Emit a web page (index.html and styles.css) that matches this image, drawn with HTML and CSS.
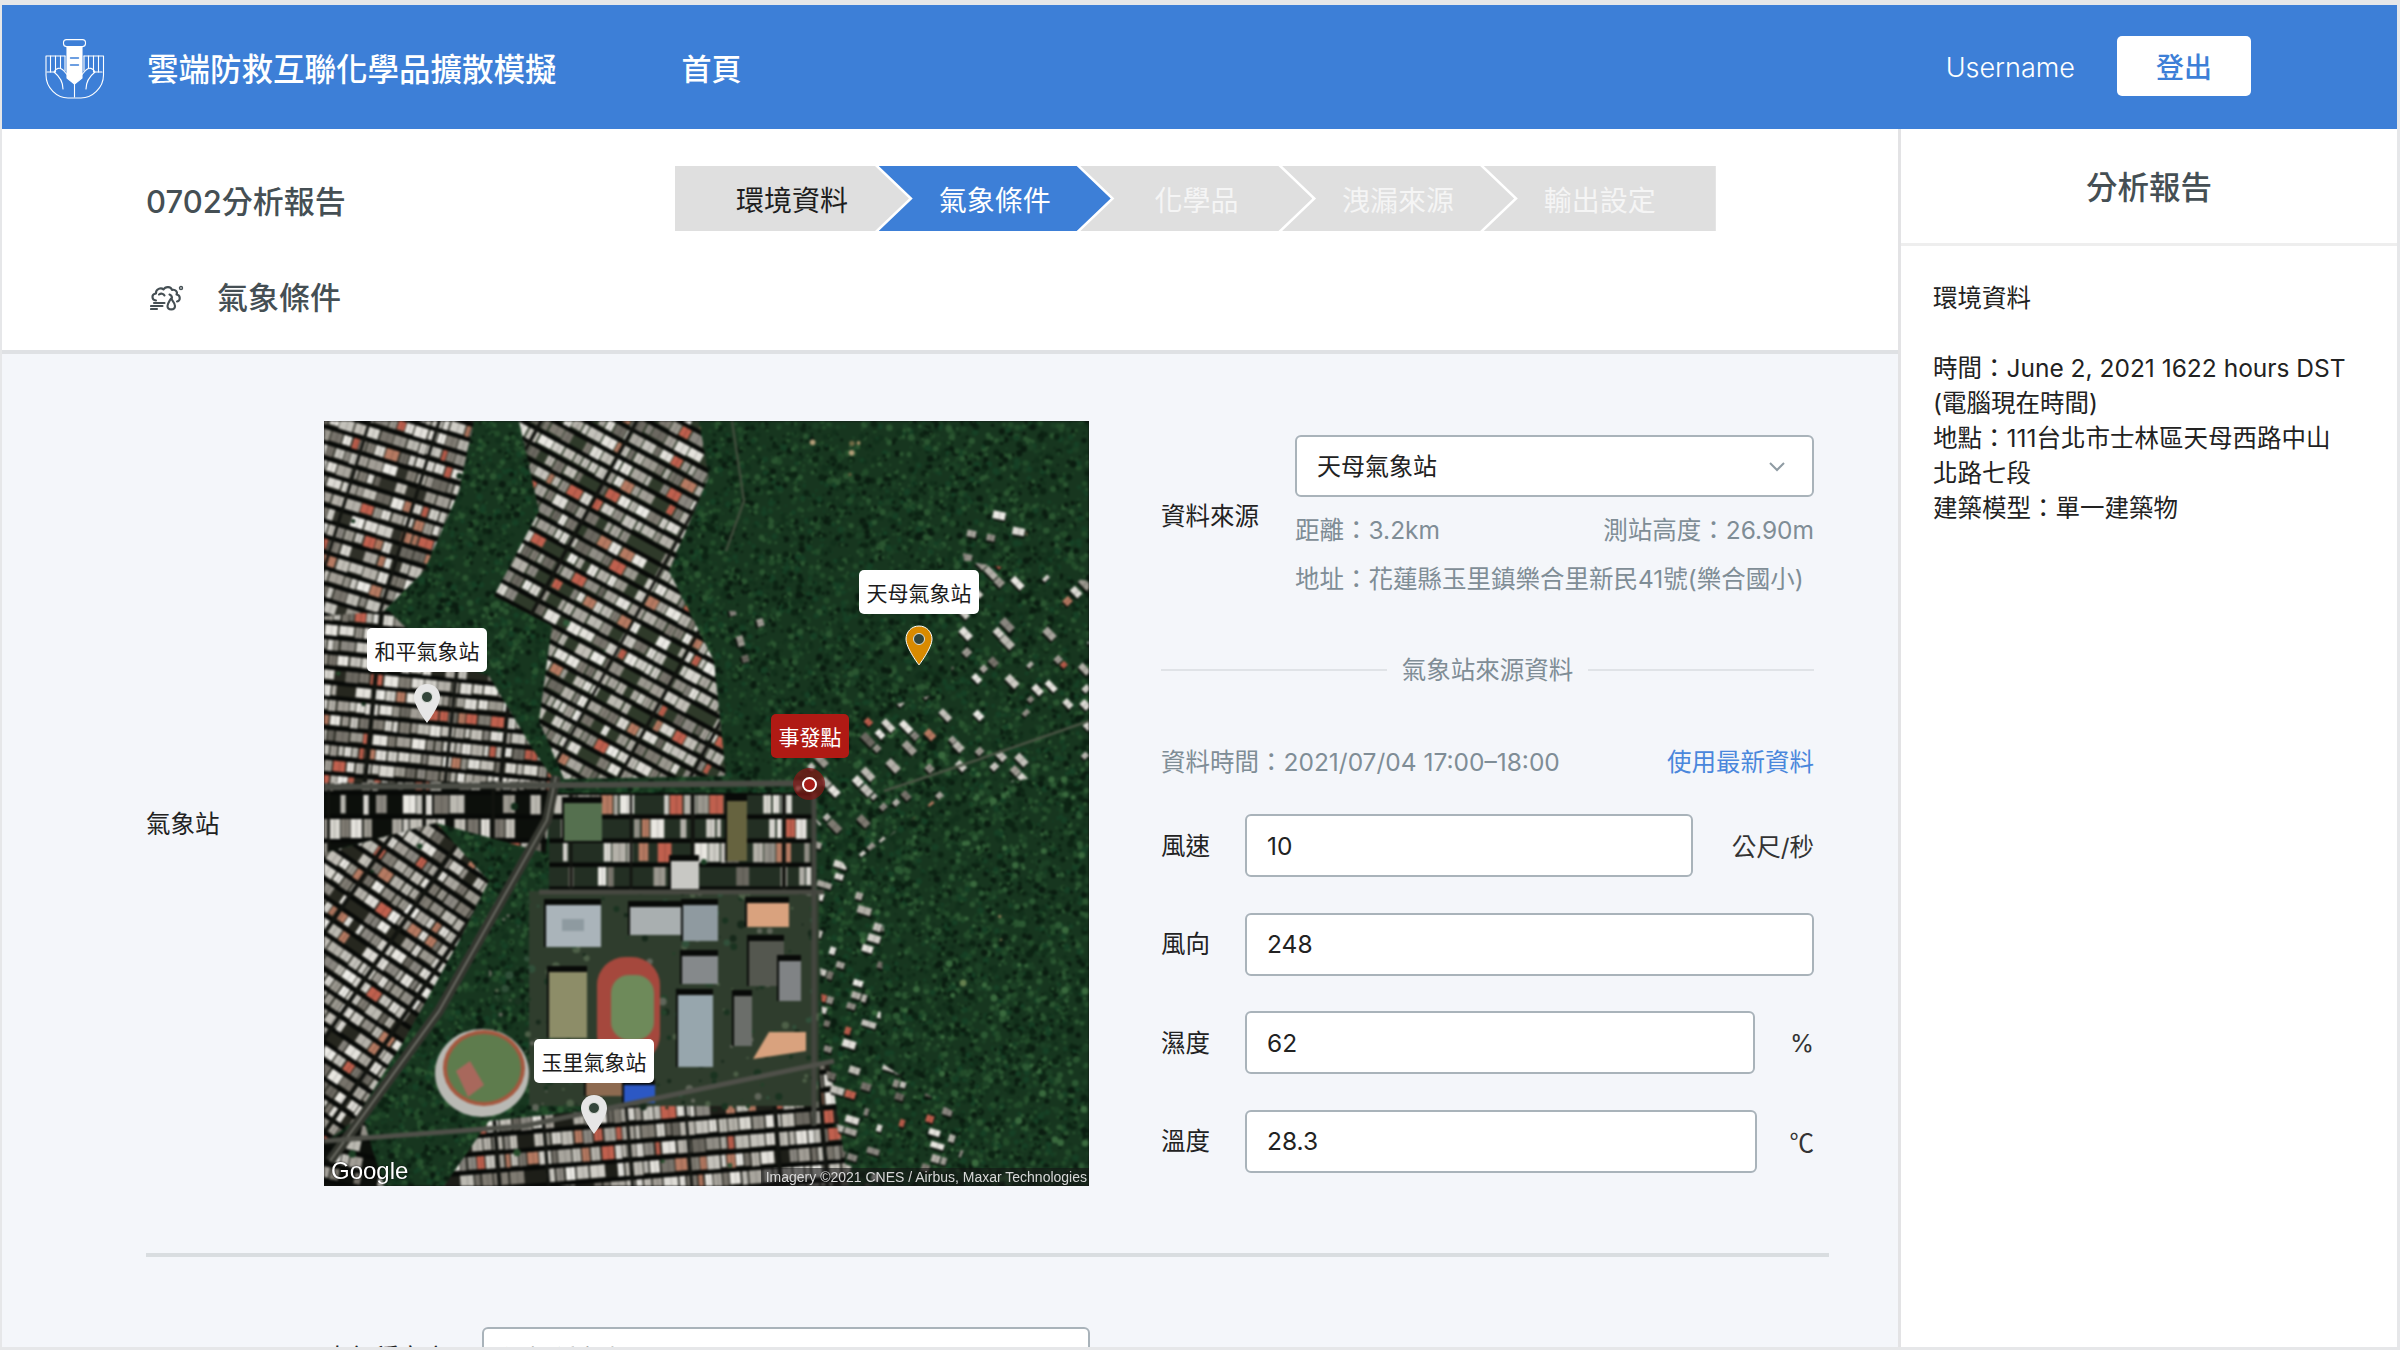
FILE: index.html
```html
<!DOCTYPE html>
<html lang="zh-Hant">
<head>
  <meta charset="UTF-8">
  <meta name="viewport" content="width=device-width, initial-scale=1.0">
  <title>雲端防救互聯化學品擴散模擬</title>
  <link rel="stylesheet" href="styles.css">
</head>
<body>
<div class="frame">

  <!-- Top bar -->
  <header class="topbar">
    <svg class="logo" viewBox="0 0 60 60" fill="none" stroke="#fff" stroke-width="1.1" stroke-linecap="round" stroke-linejoin="round">
      <rect x="18.5" y="0.6" width="22" height="7" rx="3"/>
      <path d="M22 8 H37 V39 L29.5 45 L22 39 Z" fill="#fff"/>
      <path d="M25.5 19 H33.5 M25.5 26 H33.5" stroke="#3d7fd7" stroke-width="1.4"/>
      <path d="M1 17 H20 M1 17 V36 C1 49 12 59 23 59 H36 C47 59 58.500 49 58.500 36 V17 H39"/>
      <path d="M5.500 17 V33 M10.500 17 V33 M15.500 17 V29 M20 17 V32"/>
      <path d="M39 32 V17 M43.500 29 V17 M48.500 33 V17 M53.500 33 V17"/>
      <path d="M2 33 H9 C11 29 15 28 18 31 L29.500 44 L41 31 C44 28 48 29 50 33 H57"/>
      <path d="M9 33 C14 37 18 42 18 50 M50 33 C45 37 41 42 41 50 M29.500 44 V58"/>
    </svg>
    <div class="brand">雲端防救互聯化學品擴散模擬</div>
    <a class="nav-link">首頁</a>
    <div class="user-area">
      <span class="username">Username</span>
      <button class="logout">登出</button>
    </div>
  </header>

  <div class="workspace">
    <main class="main">

      <!-- Title, stepper and section name -->
      <section class="page-head">
        <div class="head-row">
          <h1 class="report-title">0702分析報告</h1>
          <ol class="stepper">
            <li class="step step-first step-done">環境資料</li>
            <li class="step step-active">氣象條件</li>
            <li class="step">化學品</li>
            <li class="step">洩漏來源</li>
            <li class="step step-last">輸出設定</li>
          </ol>
        </div>
        <h2 class="section-title">
          <svg class="section-icon" viewBox="0 0 34 26" fill="none" stroke="#454f54" stroke-width="2.1" stroke-linecap="round" stroke-linejoin="round">
            <path d="M6 15.500 C1.500 15 1 9 6 8.500 C5.500 4 11 2 13.500 4.500 C15.500 1 21 1.500 22 5 C25.500 4 28 7 26.500 9.500 C30.500 10 31 15.500 27 16.500"/>
            <path d="M9 9.500 C11 8 13.500 8.500 14.500 10.500 M22 13 C22 11.500 21 10 19.500 9.500"/>
            <path d="M21 13.500 C19 17 17.500 18.500 17.500 21 C17.500 25.500 25 25.500 25 21 C25 18.500 23 16.500 21 13.500 Z"/>
            <circle cx="31" cy="3" r="1.500" stroke-width="1.400"/>
            <path d="M4 18 H14.500 M1 21 H12.500 M1 24 H7"/>
          </svg>
          氣象條件
        </h2>
      </section>

      <section class="content">
        <div class="station-row">
          <div class="row-label station-label">氣象站</div>

          <!-- Satellite map with station pins -->
          <div class="map">
            <canvas id="map-canvas" class="map-canvas" width="765" height="765"></canvas>

            <div class="map-tag tag-tianmu">天母氣象站</div>
            <svg class="pin pin-tianmu" viewBox="0 0 28 41"><path class="pin-orange" d="M14 1 C6.500 1 1 7 1 14 C1 23 14 40 14 40 C14 40 27 23 27 14 C27 7 21.500 1 14 1 Z"/><circle cx="14" cy="14" r="5.500" class="pin-hole"/></svg>

            <div class="map-tag tag-heping">和平氣象站</div>
            <svg class="pin pin-heping" viewBox="0 0 28 41"><path class="pin-grey" d="M14 1 C6.500 1 1 7 1 14 C1 23 14 40 14 40 C14 40 27 23 27 14 C27 7 21.500 1 14 1 Z"/><circle cx="14" cy="14" r="5.500" class="pin-hole"/></svg>

            <div class="map-tag tag-yuli">玉里氣象站</div>
            <svg class="pin pin-yuli" viewBox="0 0 28 41"><path class="pin-grey" d="M14 1 C6.500 1 1 7 1 14 C1 23 14 40 14 40 C14 40 27 23 27 14 C27 7 21.500 1 14 1 Z"/><circle cx="14" cy="14" r="5.500" class="pin-hole"/></svg>

            <div class="map-tag tag-incident">事發點</div>
            <div class="incident-dot"><span></span></div>

            <div class="map-google">Google</div>
            <div class="map-credit">Imagery ©2021 CNES / Airbus, Maxar Technologies</div>
          </div>

          <!-- Weather form -->
          <div class="weather-form">
            <div class="source-row">
              <div class="row-label source-label">資料來源</div>
              <div class="source-body">
                <div class="select">
                  <span>天母氣象站</span>
                  <svg class="chevron" viewBox="0 0 18 11" fill="none" stroke="#8f9ba3" stroke-width="2"><path d="M2 2 L9 9 L16 2"/></svg>
                </div>
                <div class="meta meta-split"><span>距離：3.2km</span><span>測站高度：26.90m</span></div>
                <div class="meta">地址：花蓮縣玉里鎮樂合里新民41號(樂合國小)</div>
              </div>
            </div>

            <div class="split-line"><span>氣象站來源資料</span></div>

            <div class="data-time">
              <span>資料時間：2021/07/04 17:00–18:00</span>
              <a class="link">使用最新資料</a>
            </div>

            <div class="fields">
              <div class="field">
                <label class="row-label">風速</label>
                <input class="text-input" type="text" value="10">
                <span class="unit unit-wide">公尺/秒</span>
              </div>
              <div class="field">
                <label class="row-label">風向</label>
                <input class="text-input" type="text" value="248">
              </div>
              <div class="field">
                <label class="row-label">濕度</label>
                <input class="text-input" type="text" value="62">
                <span class="unit">%</span>
              </div>
              <div class="field">
                <label class="row-label">溫度</label>
                <input class="text-input" type="text" value="28.3">
                <span class="unit unit-narrow">℃</span>
              </div>
            </div>
          </div>
        </div>

        <hr class="rule">

        <div class="next-row">
          <div class="row-label next-label">大氣穩定度</div>
          <div class="select next-select"><span>選擇穩定度</span></div>
        </div>
      </section>
    </main>

    <!-- Report panel -->
    <aside class="report">
      <div class="report-head">分析報告</div>
      <div class="report-body">
        <p class="report-sub">環境資料</p>
        <p>時間：June 2, 2021 1622 hours DST<br>(電腦現在時間)<br>地點：111台北市士林區天母西路中山<br>北路七段<br>建築模型：單一建築物</p>
      </div>
    </aside>
  </div>
</div>
<script src="map.js"></script>
</body>
</html>
```

FILE: styles.css
```css
:root {
  --blue: #3d7fd7;
  --page-bg: #f4f6fa;
  --text: #222;
  --title: #454f54;
  --muted: #7f8d96;
  --line: #a9b3ba;
}

html, body {
  height: 100%;
  margin: 0;
  overflow: hidden;
  font-family: "Inter", "Noto Sans CJK TC", sans-serif;
  color: var(--text);
  background-color: #e6e7e9;
}

.frame {
  height: 1350px;
  box-sizing: border-box;
  padding: 5px 3px 3px 2px;
  display: flex;
  flex-direction: column;
}

/* Top bar */
.topbar {
  height: 124px;
  flex: none;
  display: flex;
  align-items: center;
  background-color: var(--blue);
  color: #fff;
}

.logo {
  width: 60px;
  height: 60px;
  margin-left: 43px;
  margin-top: 3px;
}

.brand {
  margin-left: 42px;
  font-size: 31.5px;
  font-weight: 500;
}

.nav-link {
  margin-left: 125px;
  font-size: 30px;
  font-weight: 500;
}

.user-area {
  margin-left: auto;
  margin-right: 146px;
  display: flex;
  align-items: center;
  gap: 42px;
}

.username {
  font-size: 27px;
  font-weight: 300;
}

.logout {
  width: 134px;
  height: 60px;
  margin-top: -2px;
  border: none;
  border-radius: 5px;
  background-color: #fff;
  color: var(--blue);
  font-family: inherit;
  font-size: 28px;
  font-weight: 500;
}

/* Body */
.workspace {
  flex: 1;
  min-height: 0;
  display: flex;
}

.main {
  flex: 1;
  min-width: 0;
  overflow: hidden;
  background-color: var(--page-bg);
}

.page-head {
  height: 221px;
  box-sizing: content-box;
  background-color: #fff;
  border-bottom: 4px solid #dfe1e4;
  padding-left: 144px;
}

.head-row {
  display: flex;
  padding-top: 37px;
}

.report-title {
  width: 529px;
  margin: 0;
  padding-top: 6px;
  font-size: 31px;
  line-height: 60px;
  font-weight: 500;
  color: var(--title);
}

.stepper {
  display: flex;
  margin: 0;
  padding: 0;
  list-style: none;
}

.step {
  width: 232px;
  height: 65px;
  margin-left: -30.300px;
  display: flex;
  align-items: center;
  justify-content: center;
  font-size: 28px;
  color: #f5f5f5;
  background-color: #dfdfdf;
  clip-path: polygon(0 0, calc(100% - 34px) 0, 100% 50%, calc(100% - 34px) 100%, 0 100%, 34px 50%);
}

.step-first {
  width: 234px;
  margin-left: 0;
  clip-path: polygon(0 0, calc(100% - 34px) 0, 100% 50%, calc(100% - 34px) 100%, 0 100%);
}

.step-last {
  clip-path: polygon(0 0, 100% 0, 100% 100%, 0 100%, 34px 50%);
}

.step-done {
  color: #1d1d1d;
}

.step-active {
  background-color: var(--blue);
  color: #fff;
}

.section-title {
  margin: 43px 0 0 0;
  display: flex;
  align-items: center;
  font-size: 31px;
  line-height: 46px;
  font-weight: 500;
  color: var(--title);
}

.section-icon {
  width: 34px;
  height: 26px;
  margin: 0 33px 0 4px;
}

.content {
  padding: 67px 0 0 144px;
  width: 1683px;
}

.station-row {
  display: flex;
  align-items: flex-start;
}

.row-label {
  font-size: 24.500px;
  line-height: 34px;
  color: var(--text);
}

.station-label {
  width: 178px;
  margin-top: 386px;
}

/* Map */
.map {
  position: relative;
  width: 765px;
  height: 765px;
  flex: none;
  overflow: hidden;
  outline: 2px solid #111;
  outline-offset: -2px;
}

.map-canvas {
  display: block;
  filter: blur(0.8px);
}

.map-tag {
  position: absolute;
  width: 120px;
  height: 44px;
  display: flex;
  align-items: center;
  justify-content: center;
  border-radius: 5px;
  background-color: #fff;
  color: #1b1b1b;
  font-size: 21px;
}

.tag-tianmu { left: 535px; top: 149px; }
.tag-heping { left: 43px; top: 207px; }
.tag-yuli { left: 210px; top: 618px; }

.tag-incident {
  left: 447px;
  top: 293px;
  width: 78px;
  background-color: #b01a14;
  color: #fff;
}

.pin {
  position: absolute;
  width: 28px;
  height: 41px;
}

.pin-tianmu { left: 581px; top: 204px; }
.pin-heping { left: 89px; top: 262px; }
.pin-yuli { left: 256px; top: 673px; }

.pin-orange { fill: #d98a00; stroke: #fff; stroke-width: 1; }
.pin-grey { fill: #e6e6e6; }
.pin-hole { fill: #33453a; stroke: #dfe3dd; stroke-width: 1; }

.incident-dot {
  position: absolute;
  left: 469px;
  top: 347px;
  width: 32px;
  height: 32px;
  border-radius: 50%;
  background-color: rgba(140, 20, 20, 0.65);
  display: flex;
  align-items: center;
  justify-content: center;
}

.incident-dot span {
  width: 11px;
  height: 11px;
  border: 2px solid #fff;
  border-radius: 50%;
  background-color: #a81c18;
}

.map-google {
  position: absolute;
  left: 7px;
  bottom: 1px;
  color: #fff;
  font-family: "Liberation Sans", sans-serif;
  font-size: 24px;
  line-height: 28px;
  text-shadow: 0 0 2px #000;
}

.map-credit {
  position: absolute;
  right: 0;
  bottom: 0;
  height: 18px;
  padding: 0 2px 0 5px;
  background-color: rgba(20, 20, 20, 0.6);
  color: #d8d8d8;
  font-family: "Liberation Sans", sans-serif;
  font-size: 14px;
  line-height: 18px;
  white-space: nowrap;
}

/* Weather form */
.weather-form {
  width: 653px;
  margin-left: 72px;
  margin-top: 14px;
  flex: none;
}

.source-row {
  display: flex;
  align-items: center;
}

.source-label {
  width: 134px;
  flex: none;
}

.source-body {
  flex: 1;
}

.select {
  height: 62px;
  box-sizing: border-box;
  display: flex;
  align-items: center;
  justify-content: space-between;
  padding: 0 16px 3px 20px;
  border: 2px solid var(--line);
  border-radius: 6px;
  background-color: #fff;
  font-size: 24px;
}

.chevron {
  width: 18px;
  height: 11px;
  margin: 3px 10px 0 0;
}

.meta {
  margin-top: 15px;
  font-size: 24.500px;
  line-height: 34px;
  color: var(--muted);
}

.meta-split {
  display: flex;
  justify-content: space-between;
  margin-top: 16px;
}

.split-line {
  margin-top: 57px;
  display: flex;
  align-items: center;
  gap: 15px;
  font-size: 24.500px;
  line-height: 34px;
  color: var(--muted);
}

.split-line::before,
.split-line::after {
  content: "";
  flex: 1;
  height: 2px;
  background-color: #e0e3e7;
}

.data-time {
  margin-top: 58px;
  display: flex;
  justify-content: space-between;
  font-size: 24.500px;
  line-height: 34px;
  color: var(--muted);
}

.link {
  color: #4a87dc;
}

.fields {
  margin-top: 35px;
  display: flex;
  flex-direction: column;
  gap: 35.5px;
}

.field {
  display: flex;
  align-items: center;
  height: 63px;
}

.field .row-label {
  width: 84px;
  flex: none;
}

.text-input {
  flex: 1;
  min-width: 0;
  height: 63px;
  box-sizing: border-box;
  padding: 0 20px;
  border: 2px solid var(--line);
  border-radius: 6px;
  background-color: #fff;
  font-family: inherit;
  font-size: 24.500px;
  color: var(--text);
}

.unit {
  width: 59px;
  flex: none;
  text-align: right;
  font-size: 24.500px;
  color: #333;
}

.unit-wide { width: 121px; }

.unit-narrow {
  width: 57px;
  font-family: "Noto Sans CJK TC", sans-serif;
}

.rule {
  margin: 67px 0 0 0;
  height: 4px;
  border: none;
  background-color: #d9dde0;
}

.next-row {
  margin-top: 70px;
  display: flex;
  align-items: flex-start;
}

.next-label {
  width: 157px;
  margin-left: 179px;
  padding-top: 14px;
}

.next-select {
  width: 608px;
  color: #777;
}

/* Report panel */
.report {
  width: 499px;
  flex: none;
  box-sizing: border-box;
  border-left: 3px solid #e3e3e5;
  background-color: #fff;
}

.report-head {
  height: 112px;
  padding-bottom: 2px;
  border-bottom: 3px solid #eeeeee;
  display: flex;
  align-items: center;
  justify-content: center;
  font-size: 31.5px;
  font-weight: 500;
  color: var(--title);
}

.report-body {
  padding: 35px 15px 0 32px;
  font-size: 24.500px;
  line-height: 35px;
  color: var(--text);
}

.report-body p {
  margin: 0;
}

.report-sub {
  padding-bottom: 35px;
}
```

FILE: map.js
```js
// Hand drawn stand-in for the satellite picture: forest, rows of houses, campus
const canvas = document.getElementById("map-canvas");
const ctx = canvas.getContext("2d");

let seed = 4711;
function rnd() {
  seed = (seed * 16807) % 2147483647;
  return seed / 2147483647;
}

function pick(list) {
  return list[Math.floor(rnd() * list.length)];
}

function shape(points) {
  ctx.beginPath();
  points.forEach((p, i) => (i ? ctx.lineTo(p[0], p[1]) : ctx.moveTo(p[0], p[1])));
  ctx.closePath();
}

function trees(points, colors, count, size) {
  ctx.save();
  shape(points);
  ctx.clip();
  for (let i = 0; i < count; i++) {
    ctx.fillStyle = pick(colors);
    ctx.beginPath();
    ctx.arc(rnd() * 765, rnd() * 765, 0.8 + rnd() * size, 0, 7);
    ctx.fill();
  }
  ctx.restore();
}

const ROOFS = ["#cfcdc6", "#b4b1a9", "#918e86", "#e4e2dc", "#77736b", "#c2bfb7", "#a29e96", "#ecebe6", "#6b6860", "#a9a69e", "#d8d6cf", "#8a8780", "#c4c2bb", "#b67a62", "#dedcd6", "#9b988f", "#c0604e", "#e9e7e1", "#7f7b72", "#bcbab2"];
const FOLIAGE = ["#1c3f24", "#274d2c", "#122c19", "#31593a"];

function houses(points, angle, gap, density, ground) {
  ctx.save();
  shape(points);
  ctx.clip();
  if (ground) {
    ctx.fillStyle = ground;
    ctx.fill();
  }
  ctx.translate(382, 382);
  ctx.rotate(angle);
  for (let y = -800; y < 800; y += gap) {
    const dark = density > 0.6;
    if (dark) {
      ctx.fillStyle = "#070907";
      ctx.fillRect(-800, y + gap - 4.5, 1600, 4.5);
    }
    let x = -800 + rnd() * 10;
    while (x < 800) {
      if (rnd() < density) {
        const w = 4 + rnd() * 11;
        const h = gap - 4 - rnd() * 2;
        if (!dark) {
          ctx.fillStyle = "#0a0f0a";
          ctx.fillRect(x + 1, y + 2, w, h);
        }
        ctx.fillStyle = pick(ROOFS);
        ctx.fillRect(x, y, w, h);
        ctx.fillStyle = "rgba(0,0,0,0.25)";
        ctx.fillRect(x + w * 0.5, y, 0.8, h);
        x += w + 0.7 + rnd() * 1.4;
      } else {
        x += 5 + rnd() * 16;
      }
    }
  }
  // cross lanes cut the rows into blocks
  if (density > 0.6) {
    for (let x = -800; x < 800; x += 45 + rnd() * 50) {
      ctx.fillStyle = "#11130f";
      ctx.fillRect(x, -800, 2.5 + rnd() * 2, 1600);
    }
  }
  ctx.restore();
  // a few trees breaking up the blocks
  trees(points, FOLIAGE, Math.round(density * 70), 3);
}

function road(points, width, color) {
  ctx.beginPath();
  points.forEach((p, i) => (i ? ctx.lineTo(p[0], p[1]) : ctx.moveTo(p[0], p[1])));
  ctx.lineWidth = width;
  ctx.strokeStyle = color;
  ctx.stroke();
}

function box(x, y, w, h, color) {
  ctx.fillStyle = "#080a08";
  ctx.fillRect(x - 2, y - 6, w + 2, h + 6);
  ctx.fillStyle = color;
  ctx.fillRect(x, y, w, h);
}

const WHOLE = [[0, 0], [765, 0], [765, 765], [0, 765]];

// forest everywhere first
ctx.fillStyle = "#17361f";
ctx.fillRect(0, 0, 765, 765);
trees(WHOLE, ["#12301b", "#1c4125", "#234c2a", "#0c2313", "#2b5631", "#164025", "#0a1c10"], 22000, 2.6);
trees([[520, 300], [765, 340], [765, 765], [640, 765], [520, 560]], ["#2d5a34", "#3a6a3e", "#1c4125", "#0c2313"], 2500, 3);

// clearings on the hill
trees([[465, 3], [535, 3], [540, 60], [525, 92], [490, 70], [470, 40]], ["#8c7a55", "#a38d64", "#6f6a45", "#b19d78", "#5c5a3a"], 900, 2.4);
trees([[620, 0], [730, 0], [720, 30], [640, 30]], ["#6d6a45", "#8c7a55", "#3e5a35"], 160, 3);
trees([[620, 560], [680, 555], [680, 590], [640, 600]], ["#66804f", "#7b8a5a"], 240, 3);
trees([[590, 470], [700, 450], [705, 500], [620, 560]], ["#6f6a45", "#8c7a55", "#3e5a35", "#2b5c33"], 400, 2.6);

// neighbourhoods
houses([[0, 0], [150, 0], [135, 70], [100, 150], [60, 190], [0, 200]], 0.3, 15, 0.95, "#2f3028");
houses([[195, 0], [375, 0], [385, 55], [345, 150], [390, 240], [402, 355], [240, 358], [215, 300], [228, 205], [170, 175], [215, 90]], 0.5, 15, 0.88, "#2f3a2a");
houses([[0, 195], [65, 190], [110, 235], [165, 255], [210, 330], [232, 362], [0, 368]], 0.1, 15, 0.96, "#26271f");
houses([[0, 362], [228, 360], [222, 432], [112, 402], [0, 432]], 0, 24, 0.7, "#0c0f0b");
houses([[0, 432], [112, 402], [165, 460], [135, 520], [80, 620], [30, 700], [0, 722]], 0.6, 15, 0.96, "#26271f");
houses([[0, 722], [40, 700], [60, 765], [0, 765]], 0.2, 16, 0.7, "#0c0f0b");
houses([[165, 700], [355, 680], [505, 640], [525, 765], [120, 765]], -0.08, 18, 0.95, "#1d1e18");
houses([[640, 140], [765, 160], [765, 345], [620, 375], [525, 445], [470, 370], [505, 300], [625, 270]], 0.8, 12, 0.22);
houses([[490, 400], [560, 500], [555, 640], [650, 705], [625, 765], [525, 765], [500, 640]], 0.3, 12, 0.3);
houses([[630, 70], [700, 70], [705, 140], [640, 140]], 0.2, 12, 0.14);
houses([[380, 190], [450, 190], [445, 260], [395, 250]], 1.3, 12, 0.2);

// campus
ctx.fillStyle = "#2f3d2d";
ctx.fillRect(205, 470, 290, 215);
trees([[165, 470], [495, 470], [495, 690], [165, 690]], ["#24422a", "#31503a", "#4e6048", "#1a3320", "#60665a", "#16281a"], 2400, 3.2);
houses([[225, 372], [490, 372], [490, 469], [225, 469]], 0, 24, 0.65, "#232f23");
box(240, 382, 38, 38, "#55704f");
box(403, 380, 20, 60, "#66633f");
box(347, 440, 28, 28, "#c8c8c4");
box(222, 484, 55, 42, "#aab4ba");
ctx.fillStyle = "#8e9aa0";
ctx.fillRect(238, 498, 22, 12);
box(306, 486, 53, 28, "#a9afb0");
box(359, 484, 35, 36, "#8f9aa0");
box(358, 535, 36, 28, "#85898b");
box(423, 482, 42, 24, "#d9a27e");
box(425, 520, 35, 45, "#54574f");
box(455, 540, 22, 40, "#808385");
box(410, 575, 18, 50, "#6b6e6a");
box(225, 551, 38, 66, "#8d8d68");

// running track
ctx.fillStyle = "#a5483d";
ctx.beginPath();
ctx.roundRect(273, 536, 63, 106, 28);
ctx.fill();
ctx.fillStyle = "#6e8a5a";
ctx.beginPath();
ctx.roundRect(287, 554, 43, 65, 18);
ctx.fill();

box(354, 574, 35, 72, "#97a6ad");

ctx.fillStyle = "#d9a27e";
ctx.beginPath();
ctx.moveTo(445, 611);
ctx.lineTo(482, 611);
ctx.lineTo(482, 630);
ctx.lineTo(429, 638);
ctx.closePath();
ctx.fill();

// baseball stadium
ctx.fillStyle = "#b9b9b4";
ctx.beginPath();
ctx.ellipse(158, 652, 47, 44, 0, 0, 7);
ctx.fill();
ctx.fillStyle = "#a5583f";
ctx.beginPath();
ctx.ellipse(160, 647, 41, 38, 0, 0, 7);
ctx.fill();
ctx.fillStyle = "#5e7c4d";
ctx.beginPath();
ctx.ellipse(160, 647, 37, 34, 0, 0, 7);
ctx.fill();
ctx.fillStyle = "#a8685c";
ctx.beginPath();
ctx.moveTo(144, 676);
ctx.lineTo(132, 650);
ctx.lineTo(146, 640);
ctx.lineTo(160, 664);
ctx.closePath();
ctx.fill();
box(262, 655, 58, 20, "#8d6a50");
box(300, 664, 31, 18, "#2c58c4");

// main roads
road([[6, 740], [115, 590], [223, 399], [232, 355]], 10, "#34362f");
road([[6, 740], [115, 590], [223, 399], [232, 355]], 1.5, "#7c7c74");
road([[0, 366], [500, 362]], 6, "#4a4c45");
road([[215, 471], [500, 471]], 5, "#474941");
road([[490, 372], [490, 705]], 5, "#44463f");
road([[0, 720], [200, 705], [510, 640]], 5, "#4f5049");
road([[408, 0], [420, 80], [402, 130]], 2.5, "#3f4c3b");
road([[560, 370], [650, 340], [765, 300]], 2.5, "#4a5444");
```
